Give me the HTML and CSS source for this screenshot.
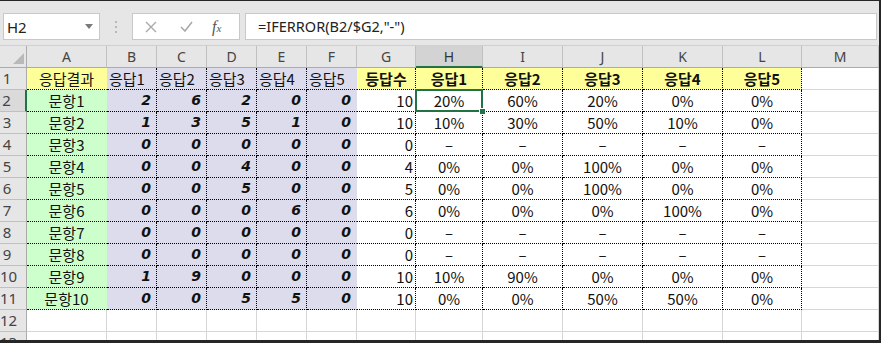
FILE: index.html
```html
<!DOCTYPE html>
<html lang="ko">
<head>
    <meta charset="UTF-8">
    <meta name="viewport" content="width=device-width, initial-scale=1.0">
    <title>응답결과</title>
    <link rel="stylesheet" href="styles.css">
</head>
<body>
    <div class="window">
        <div class="formula-bar">
            <div class="name-box">
                <span>H2</span>
                <svg class="drop" width="8" height="5" viewBox="0 0 8 5"><path d="M0 0H8L4 5Z" fill="#7a7a7a"/></svg>
            </div>
            <div class="grip">
                <svg width="3" height="14" viewBox="0 0 3 14"><rect x="0" y="1" width="2" height="2" fill="#b8b8b8"/><rect x="0" y="6" width="2" height="2" fill="#b8b8b8"/><rect x="0" y="11" width="2" height="2" fill="#b8b8b8"/></svg>
            </div>
            <div class="fx-box">
                <svg class="btn" width="12" height="12" viewBox="0 0 12 12"><path d="M1 1L11 11M11 1L1 11" stroke="#a9a9a9" stroke-width="1.4" fill="none"/></svg>
                <svg class="btn" width="13" height="11" viewBox="0 0 13 11"><path d="M1 6L5 10L12 1" stroke="#a9a9a9" stroke-width="1.6" fill="none"/></svg>
                <span class="fx">f<small>x</small></span>
            </div>
            <div class="formula">=IFERROR(B2/$G2,"-")</div>
        </div>
        <div class="sheet" id="sheet"></div>
    </div>

    <script>
        const rows = [
            ['문항1', [2, 6, 2, 0, 0]],
            ['문항2', [1, 3, 5, 1, 0]],
            ['문항3', [0, 0, 0, 0, 0]],
            ['문항4', [0, 0, 4, 0, 0]],
            ['문항5', [0, 0, 5, 0, 0]],
            ['문항6', [0, 0, 0, 6, 0]],
            ['문항7', [0, 0, 0, 0, 0]],
            ['문항8', [0, 0, 0, 0, 0]],
            ['문항9', [1, 9, 0, 0, 0]],
            ['문항10', [0, 0, 5, 5, 0]]
        ];
        const letters = ['A', 'B', 'C', 'D', 'E', 'F', 'G', 'H', 'I', 'J', 'K', 'L', 'M'];
        const sheet = document.getElementById('sheet');

        function cell(cls, text) {
            const d = document.createElement('div');
            d.className = 'cell ' + cls;
            d.textContent = text === undefined ? '' : text;
            sheet.appendChild(d);
            return d;
        }

        // column headers
        cell('corner');
        letters.forEach(l => cell('ch' + (l === 'H' ? ' active' : ''), l));

        // row 1
        cell('rh', 1);
        cell('a hdr', '응답결과');
        for (let i = 1; i <= 5; i++) cell('n hdr' + (i === 5 ? ' last' : ''), '응답' + i);
        cell('g hdr', '등답수');
        for (let i = 1; i <= 5; i++) cell('p hdr', '응답' + i);
        cell('m');

        // rows 2 - 11
        rows.forEach((r, idx) => {
            const total = r[1].reduce((s, v) => s + v, 0);
            cell('rh' + (idx === 0 ? ' active' : ''), idx + 2);
            cell('a', r[0]);
            r[1].forEach((v, i) => cell('n' + (i === 4 ? ' last' : ''), v));
            cell('g', total);
            r[1].forEach((v, i) => {
                const txt = total === 0 ? '–' : Math.round(v / total * 100) + '%';
                const c = cell('p', txt);
                if (idx === 0 && i === 0) {
                    c.classList.add('selected');
                    const h = document.createElement('span');
                    h.className = 'handle';
                    c.appendChild(h);
                }
            });
            cell('m');
        });

        // empty rows
        [12, 13].forEach(n => {
            cell('rh', n);
            letters.forEach(() => cell('empty'));
        });
    </script>
</body>
</html>
```

FILE: styles.css
```css
body {
    margin: 0;
    background: #fff;
}
.window {
    width: 881px;
    height: 343px;
    box-sizing: border-box;
    border-top: 1px solid #262626;
    border-right: 2px solid #262626;
    border-bottom: 3px solid #262626;
    overflow: hidden;
    background: #fff;
}
.formula-bar {
    height: 45px;
    background: #e6e6e6;
    display: flex;
    align-items: flex-start;
    padding-top: 12px;
    box-sizing: border-box;
    border-bottom: 1px solid #d0d0d0;
}
.name-box {
    margin-left: 3px;
    width: 97px;
    height: 27px;
    box-sizing: border-box;
    background: #fff;
    border: 1px solid #c8c8c8;
    display: flex;
    align-items: center;
    justify-content: space-between;
    padding: 0 6px 0 3px;
    font-family: "Noto Sans", sans-serif;
    font-size: 15px;
    color: #222;
}
.grip {
    width: 32px;
    height: 27px;
    display: flex;
    align-items: center;
    justify-content: center;
}
.fx-box {
    width: 108px;
    height: 27px;
    box-sizing: border-box;
    background: #fff;
    border: 1px solid #c8c8c8;
    display: flex;
    align-items: center;
    padding-left: 12px;
    gap: 23px;
}
.fx {
    font-family: "Liberation Serif", serif;
    font-style: italic;
    font-size: 16px;
    color: #555;
    margin-left: -4px;
}
.fx small {
    font-size: 11px;
}
.formula {
    flex: 1;
    margin: 0 2px 0 5px;
    height: 27px;
    box-sizing: border-box;
    background: #fff;
    border: 1px solid #c8c8c8;
    padding-left: 12px;
    font-family: "Noto Sans", sans-serif;
    font-size: 14.5px;
    line-height: 25px;
    color: #222;
}
.sheet {
    display: grid;
    grid-template-columns: 27px 80px repeat(5, 50px) 59px 67px repeat(3, 80px) 79px 77px;
    grid-auto-rows: 22px;
    font-family: "Noto Sans CJK KR", sans-serif;
    font-size: 15px;
    color: #111;
}
.cell {
    box-sizing: border-box;
    border-right: 1px solid #d6d6d6;
    border-bottom: 1px solid #d6d6d6;
    line-height: 21px;
    white-space: nowrap;
    overflow: hidden;
}
.corner {
    background: #e6e6e6;
    border-right-color: #ababab;
    border-bottom-color: #ababab;
    position: relative;
}
.corner::after {
    content: "";
    position: absolute;
    right: 2px;
    bottom: 3px;
    border-left: 11px solid transparent;
    border-bottom: 11px solid #b9b9b9;
}
.ch {
    background: #e6e6e6;
    border-right-color: #c0c0c0;
    border-bottom-color: #ababab;
    text-align: center;
    font-family: "Noto Sans", sans-serif;
    font-size: 14px;
    color: #444;
}
.ch.active {
    background: #d3d3d3;
    border-bottom: 2px solid #217346;
    color: #333;
}
.rh {
    background: #e6e6e6;
    border-right-color: #ababab;
    border-bottom-color: #c0c0c0;
    padding-right: 12px;
    text-align: center;
    font-family: "Noto Sans", sans-serif;
    font-size: 15px;
    color: #444;
}
.rh.active {
    background: #dadada;
    border-right: 2px solid #217346;
}
.a,
.n,
.g,
.p {
    border-bottom: 1px dotted #000;
}
.a {
    background: #ccffcc;
    text-align: center;
    border-right-color: transparent;
}
.a.hdr {
    background: #ffff99;
}
.n {
    background: #dcdcec;
    border-right: 1px dotted #000;
    text-align: right;
    padding-right: 5px;
    font-family: "DejaVu Sans", sans-serif;
    font-weight: bold;
    font-style: italic;
    font-size: 14px;
}
.n.last {
    border-right: 1px solid transparent;
}
.n.hdr {
    text-align: left;
    padding: 0 0 0 2px;
    font-family: "Noto Sans CJK KR", sans-serif;
    font-weight: normal;
    font-style: normal;
    font-size: 15px;
}
.g {
    text-align: right;
    padding-right: 2px;
    border-right: 1px dotted #000;
}
.p {
    text-align: center;
    border-right: 1px dotted #000;
}
.g.hdr,
.p.hdr {
    background: #ffff99;
    font-weight: bold;
    text-align: center;
    padding: 0;
}
.selected {
    position: relative;
    overflow: visible;
}
.selected::before {
    content: "";
    position: absolute;
    left: -1px;
    top: -1px;
    right: -1px;
    bottom: -1px;
    border: 2px solid #217346;
}
.handle {
    position: absolute;
    right: -4px;
    bottom: -4px;
    width: 5px;
    height: 5px;
    background: #217346;
    border: 1px solid #fff;
    z-index: 2;
}
```
